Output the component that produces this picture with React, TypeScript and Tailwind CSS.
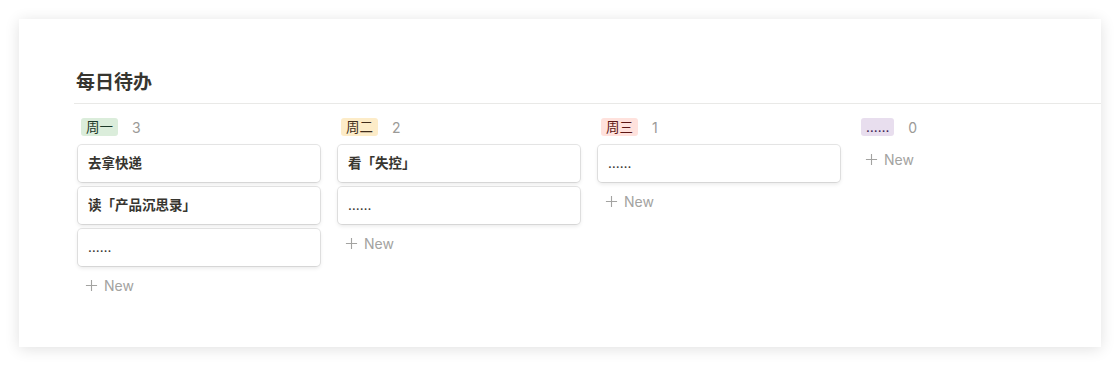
import React from "react";

const font = {
  fontFamily:
    'Inter, "Noto Sans CJK SC", "Noto Sans", sans-serif',
};

type Col = {
  tag: string;
  tagCls: string;
  items: string[];
};

const cols: Col[] = [
  {
    tag: "周一",
    tagCls: "bg-[#dbeddb] text-[#1c3829]",
    items: ["去拿快递", "读「产品沉思录」", "……"],
  },
  {
    tag: "周二",
    tagCls: "bg-[#fdecc8] text-[#402c1b]",
    items: ["看「失控」", "……"],
  },
  {
    tag: "周三",
    tagCls: "bg-[#ffe2dd] text-[#5d1715]",
    items: ["……"],
  },
  {
    tag: "……",
    tagCls: "bg-[#e8deee] text-[#412454]",
    items: [],
  },
];

const Plus = () => (
  <svg width="13" height="13" viewBox="0 0 14 14" className="text-[#a3a3a1]">
    <path d="M7 1v12M1 7h12" stroke="currentColor" strokeWidth="1.2" />
  </svg>
);

const App = () => {
  return (
    <div className="w-[1120px] h-[366px] bg-white pt-[19px] pl-[19px]" style={font}>
      <div className="w-[1082px] h-[328px] bg-white shadow-[0_2px_14px_rgba(0,0,0,0.12)] pl-[55px] pt-[51px]">
        <h1 className="pl-[2px] text-[19px] leading-[26px] font-bold text-[#37352f]">
          每日待办
        </h1>
        <div className="mt-[7px] h-px bg-[#e9e9e7]" />
        <div className="flex gap-[18px] pl-[4px] pt-[14px]">
          {cols.map((c) => (
            <div key={c.tag} className="w-[242px] flex flex-col">
              <div className="flex items-center h-[18px] pl-[3px] gap-[14px]">
                <span
                  className={`px-[5px] h-[18px] leading-[18px] rounded-[3px] text-[13.5px] ${c.tagCls}`}
                >
                  {c.tag}
                </span>
                <span className="text-[14px] text-[#9b9a97]">
                  {c.items.length}
                </span>
              </div>
              {c.items.length > 0 && (
                <div className="mt-[9px] flex flex-col gap-[5px]">
                  {c.items.map((it, i) => (
                    <div
                      key={i}
                      className={`h-[37px] rounded-[4px] bg-white shadow-[0_0_0_1px_rgba(15,15,15,0.1),0_2px_4px_rgba(15,15,15,0.1)] flex items-center pl-[10px] text-[13.5px] text-[#37352f] ${it === "……" ? "font-normal" : "font-semibold"}`}
                    >
                      {it}
                    </div>
                  ))}
                </div>
              )}
              <div
                className={`${c.items.length > 0 ? "mt-[3px]" : "mt-[7px]"} h-[32px] flex items-center gap-[6px] pl-[7px] text-[14px] text-[#a3a3a1]`}
              >
                <Plus />
                <span>New</span>
              </div>
            </div>
          ))}
        </div>
      </div>
    </div>
  );
};

export default App;
